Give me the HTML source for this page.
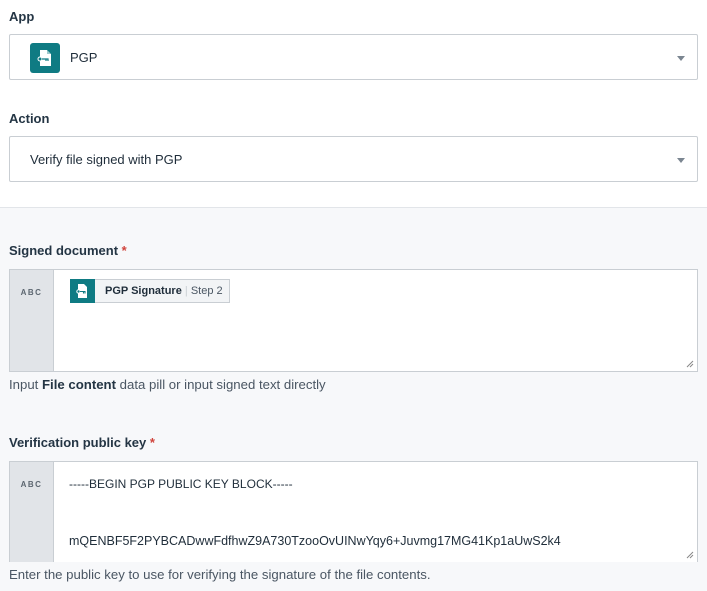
<!DOCTYPE html><html><head><style>
*{box-sizing:border-box;margin:0;padding:0}
body{width:707px;height:591px;overflow:hidden;font-family:"Liberation Sans",sans-serif;color:#1f2d3a;background:#fff;position:relative}
.a{position:absolute}
.lbl{font-weight:bold;font-size:13px;color:#243544}
.sel{border:1px solid #c9ced3;border-radius:2px;background:#fff;left:9px;width:689px}
.car{right:12px;top:21px;width:0;height:0;border-left:4.5px solid transparent;border-right:4.5px solid transparent;border-top:5px solid #7b8691}
.box{left:9px;width:689px;border:1px solid #c9ced3;background:#fff}
.abc{left:0;top:0;bottom:0;width:44px;background:#e1e4e8;border-right:1px solid #c9ced3;font-size:8px;font-weight:bold;letter-spacing:1.5px;color:#5c6670;text-align:center;padding-top:18px}
.hint{font-size:13.2px;color:#4a5663}
.req{color:#d0433b}
</style></head><body>
<div class="a lbl" style="left:9px;top:9px">App</div>
<div class="a sel" style="top:34px;height:46px">
 <div class="a" style="left:20px;top:8px;width:30px;height:30px;background:#0f7b83;border-radius:3px">
  <svg width="30" height="30" viewBox="0 0 30 30"><path d="M10 7h7l4 4v12H10z" fill="#fff"/><path d="M17 7v4h4" fill="#0f7b83" opacity=".4"/><circle cx="10" cy="16" r="2" fill="#0f7b83" stroke="#fff" stroke-width="1"/><path d="M12 16h6v2M16 16v2" stroke="#0f7b83" stroke-width="1.2" fill="none"/></svg>
 </div>
 <div class="a" style="left:60px;top:15px;font-size:13px">PGP</div>
 <div class="a car"></div>
</div>
<div class="a lbl" style="left:9px;top:111px">Action</div>
<div class="a sel" style="top:136px;height:46px">
 <div class="a" style="left:20px;top:15px;font-size:13px">Verify file signed with PGP</div>
 <div class="a car"></div>
</div>
<div class="a" style="left:0;top:207px;width:707px;height:384px;background:#f7f8fa;border-top:1px solid #e2e5e9"></div>
<div class="a lbl" style="left:9px;top:243px">Signed document <span class="req">*</span></div>
<div class="a box" style="top:269px;height:103px">
 <div class="a abc">ABC</div>
 <div class="a" style="left:60px;top:9px;height:24px;width:160px;border:1px solid #c9ced3;background:#f2f4f6;font-size:11px">
  <div class="a" style="left:-1px;top:-1px;width:25px;height:24px;background:#0f7b83">
   <svg width="25" height="24" viewBox="0 0 25 24"><path d="M8 5h6l3 3v11H8z" fill="#fff"/><circle cx="8.5" cy="12.5" r="1.7" fill="#0f7b83" stroke="#fff"/><path d="M10 12.5h5v2M13.5 12.5v2" stroke="#0f7b83" stroke-width="1.1" fill="none"/></svg>
  </div>
  <div class="a" style="left:34px;top:5px;white-space:nowrap"><b>PGP Signature</b> <span style="color:#c9ced3">|</span> <span style="color:#4a5663">Step 2</span></div>
 </div>
 <svg class="a" style="right:3px;bottom:3px" width="8" height="8"><path d="M1 7L7 1M4 7L7 4" stroke="#888" stroke-width="1"/></svg>
</div>
<div class="a hint" style="left:9px;top:377px">Input <b style="color:#243544">File content</b> data pill or input signed text directly</div>
<div class="a lbl" style="left:9px;top:435px">Verification public key <span class="req">*</span></div>
<div class="a box" style="top:461px;height:101px;border-bottom:none">
 <div class="a abc">ABC</div>
 <div class="a" style="left:59px;top:15px;font-size:12px">-----BEGIN PGP PUBLIC KEY BLOCK-----</div>
 <div class="a" style="left:59px;top:72px;font-size:12.5px">mQENBF5F2PYBCADwwFdfhwZ9A730TzooOvUINwYqy6+Juvmg17MG41Kp1aUwS2k4</div>
 <svg class="a" style="right:3px;bottom:3px" width="8" height="8"><path d="M1 7L7 1M4 7L7 4" stroke="#888" stroke-width="1"/></svg>
</div>
<div class="a hint" style="left:9px;top:567px">Enter the public key to use for verifying the signature of the file contents.</div>
</body></html>
